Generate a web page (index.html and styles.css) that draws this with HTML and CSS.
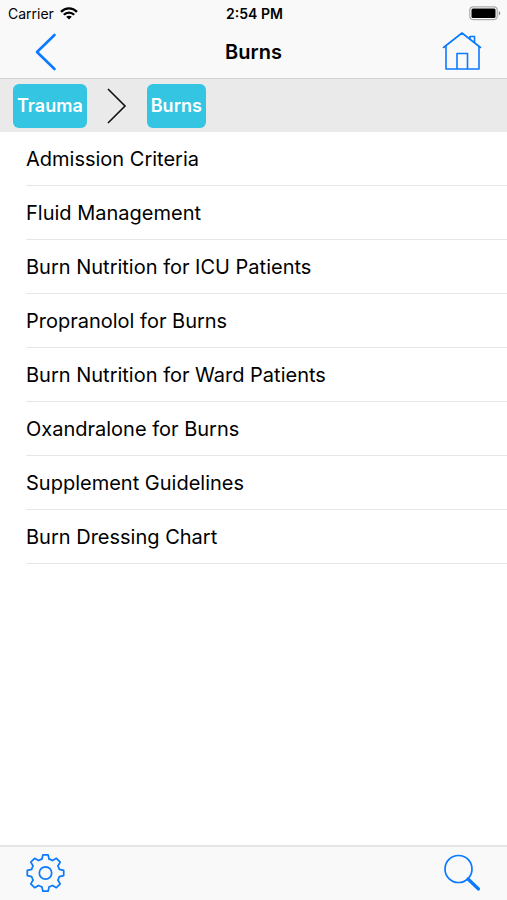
FILE: index.html
```html
<!DOCTYPE html>
<html lang="en">
<head>
<meta charset="utf-8">
<meta name="viewport" content="width=device-width, initial-scale=1">
<title>Burns</title>
<link rel="stylesheet" href="styles.css">
</head>
<body>
<header class="top">
  <div class="status">
    <div class="carrier">
      <span>Carrier</span>
      <svg width="18" height="13" viewBox="0 0 18 13" fill="none" stroke="#000" stroke-width="2.3" aria-hidden="true">
        <path d="M1 4.9C5.5.3 12.5.3 17 4.9"/>
        <path d="M3.8 7.8c3-3 7.400-3 10.400 0"/>
        <path d="M9 12.600 6.200 9.800c1.600-1.500 4-1.500 5.600 0z" fill="#000" stroke="none"/>
      </svg>
    </div>
    <span class="time">2:54 PM</span>
    <svg class="battery" width="32" height="15" viewBox="0 0 32 15" aria-hidden="true">
      <rect x=".8" y=".8" width="27.400" height="12.800" rx="3.500" fill="#fff" stroke="#aaa" stroke-width="1.200"/>
      <rect x="2.500" y="2.500" width="24" height="9.400" rx="1.500"/>
      <path d="M29.800 5c2 .8 2 3.600 0 4.400z" fill="#888"/>
    </svg>
  </div>
  <nav class="navbar" aria-label="Main">
    <button class="icon" aria-label="Back">
      <svg width="40" height="40" viewBox="0 0 40 40"><path d="M29.500 3 12 20 29.500 37" stroke-width="2.600"/></svg>
    </button>
    <h1>Burns</h1>
    <button class="icon" aria-label="Home">
      <svg width="40" height="40" viewBox="0 0 40 40"><path d="M1.500 15.500 20 1l18.500 14.500M4 14v23h33V14M15 37V21.500h10.500V37M28 7V4.500h4.500v6" stroke-width="1.600"/></svg>
    </button>
  </nav>
</header>
<nav class="crumbs" aria-label="Breadcrumb">
  <a class="crumb" href="#">Trauma</a>
  <svg width="20" height="36" viewBox="0 0 20 36" fill="none" stroke="#111" stroke-width="1.600" aria-hidden="true"><path d="M1 1 18 18 1 35"/></svg>
  <a class="crumb" href="#">Burns</a>
</nav>
<main>
  <ul class="list">
    <li><a href="#">Admission Criteria</a></li>
    <li><a href="#">Fluid Management</a></li>
    <li><a href="#">Burn Nutrition for ICU Patients</a></li>
    <li><a href="#">Propranolol for Burns</a></li>
    <li><a href="#">Burn Nutrition for Ward Patients</a></li>
    <li><a href="#">Oxandralone for Burns</a></li>
    <li><a href="#">Supplement Guidelines</a></li>
    <li><a href="#">Burn Dressing Chart</a></li>
  </ul>
</main>
<footer class="toolbar">
  <button class="icon" aria-label="Settings">
    <svg width="40" height="40" viewBox="-20.500 -20 40 40" stroke-width="1.700">
      <path d="M-2.600-18.200H2.600L3.600-13.800Q5.300-13.500 7-12.400L10.900-14.700 14.700-10.900 12.400-7Q13.500-5.300 13.800-3.600L18.200-2.600V2.600L13.800 3.600Q13.500 5.300 12.400 7L14.700 10.900 10.900 14.700 7 12.400Q5.300 13.500 3.600 13.800L2.600 18.200H-2.600L-3.600 13.800Q-5.300 13.500-7 12.400L-10.900 14.700-14.700 10.900-12.400 7Q-13.500 5.300-13.800 3.600L-18.200 2.600V-2.600L-13.800-3.600Q-13.500-5.300-12.400-7L-14.700-10.900-10.900-14.700-7-12.400Q-5.300-13.500-3.600-13.800Z"/>
      <circle r="6.200"/>
    </svg>
  </button>
  <button class="icon" aria-label="Search">
    <svg width="40" height="40" viewBox="0 0 40 40"><circle cx="16.500" cy="16" r="13.500" stroke-width="1.700"/><path d="m26 26 10.500 10" stroke-width="3.200"/></svg>
  </button>
</footer>
</body>
</html>
```
FILE: styles.css
```css
* {
  box-sizing: border-box;
}

body {
  margin: 0;
  min-height: 100vh;
  display: flex;
  flex-direction: column;
  background: #fff;
  color: #000;
  font-family: Inter, "Liberation Sans", sans-serif;
}

a {
  color: inherit;
  text-decoration: none;
}

.top {
  background: #f9f9f9;
  border-bottom: 1px solid #d4d4d4;
}

.status {
  display: grid;
  grid-template-columns: 1fr auto 1fr;
  align-items: center;
  height: 26px;
  padding: 0 6px 0 8px;
  font-size: 14px;
}

.carrier {
  display: flex;
  align-items: center;
  gap: 6px;
}

.time {
  font-weight: 600;
}

.battery {
  justify-self: end;
}

.navbar {
  display: flex;
  align-items: center;
  justify-content: space-between;
  height: 52px;
  padding: 0 25px;
}

h1 {
  margin: 0;
  font-size: 20px;
  font-weight: 600;
}

.icon {
  display: block;
  padding: 0;
  border: 0;
  background: none;
  cursor: pointer;
}

.icon svg {
  display: block;
  fill: none;
  stroke: #0a7aff;
  stroke-linecap: round;
  stroke-linejoin: round;
}

.crumbs {
  display: flex;
  align-items: center;
  gap: 20px;
  height: 53px;
  padding: 0 13px;
  background: #eaeaea;
}

.crumb {
  padding: 0 4px;
  border-radius: 6px;
  background: #34c5e3;
  color: #fff;
  font-size: 18px;
  font-weight: 600;
  line-height: 44px;
}

main {
  flex: 1;
}

.list {
  margin: 0;
  padding: 0 0 0 26px;
  list-style: none;
}

.list a {
  display: block;
  padding-top: 2px;
  border-bottom: 1px solid #e6e6e6;
  font-size: 20px;
  line-height: 51px;
}

.toolbar {
  display: flex;
  align-items: center;
  justify-content: space-between;
  height: 55px;
  padding: 0 25px 2px;
  background: #f9f9f9;
  border-top: 2px solid #e4e4e4;
}
```
